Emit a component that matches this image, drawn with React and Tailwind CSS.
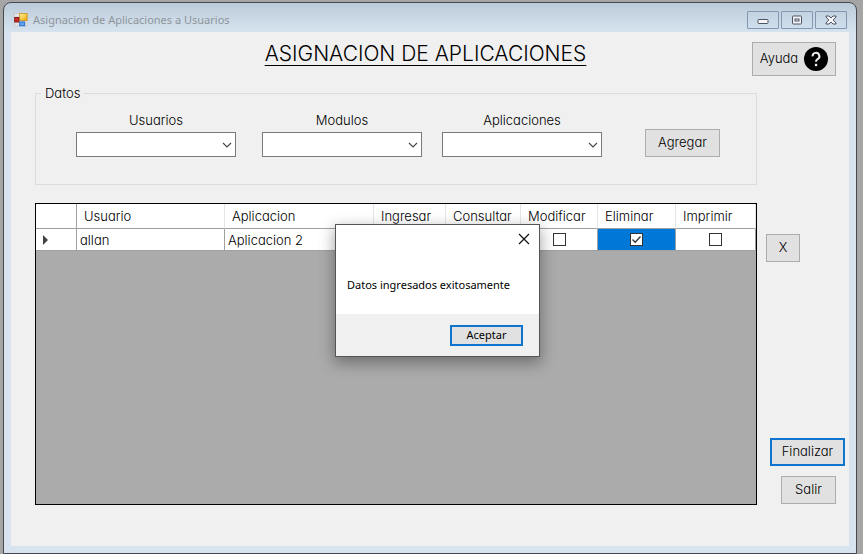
import React from "react";

const BUTTON = "flex items-center justify-center bg-[#e1e1e1] border border-[#adadad]";

const COLUMNS = ["Usuario", "Aplicacion", "Ingresar", "Consultar", "Modificar", "Eliminar", "Imprimir"];

const ROW = {
  usuario: "allan",
  aplicacion: "Aplicacion 2",
  permisos: [
    { name: "Ingresar", checked: false },
    { name: "Consultar", checked: false },
    { name: "Modificar", checked: false },
    { name: "Eliminar", checked: true, selected: true },
    { name: "Imprimir", checked: false },
  ],
};

function FormIcon() {
  return (
    <svg viewBox="0 0 14 14" className="h-3.5 w-3.5" aria-hidden="true">
      <defs>
        <linearGradient id="formYellow" x1="0" y1="0" x2="1" y2="1">
          <stop offset="0" stopColor="#fff3a0" />
          <stop offset="1" stopColor="#eda900" />
        </linearGradient>
      </defs>
      <rect x="0.5" y="0.5" width="12.5" height="12.5" fill="#e4e4e4" stroke="#c0c4c8" strokeWidth="0.6" />
      <rect x="5.7" y="0.5" width="7.4" height="7" fill="url(#formYellow)" stroke="#c98f1a" strokeWidth="0.8" />
      <rect x="0.7" y="4.4" width="4.2" height="4.6" fill="#c92a22" stroke="#7d1410" strokeWidth="0.9" />
      <rect x="5.7" y="8.9" width="5" height="3.9" fill="#5aa5f0" stroke="#2667c4" strokeWidth="0.9" />
    </svg>
  );
}

function WindowButton({ label, children }) {
  return (
    <button
      aria-label={label}
      className="flex h-[18px] w-8 items-center justify-center rounded-[1px] border border-[#8497b0] bg-linear-to-b from-[#c3d3e2] to-[#cfdeec]"
    >
      <svg viewBox="0 0 14 10" className="h-2.5 w-3.5" fill="#f5f5f5" stroke="#4b5262" strokeWidth="1">
        {children}
      </svg>
    </button>
  );
}

function Combo({ id, label }) {
  return (
    <div className="flex w-40 flex-col">
      <label htmlFor={id} className="mb-1 text-center leading-4">
        {label}
      </label>
      <div className="relative">
        <select id={id} className="block h-[25px] w-full appearance-none border border-[#7a7a7a] bg-white px-1" />
        <svg viewBox="0 0 10 6" className="pointer-events-none absolute top-2.5 right-1 h-1.5 w-2.5" fill="none" stroke="#444" strokeWidth="1.1">
          <path d="M1 1 L5 5 L9 1" />
        </svg>
      </div>
    </div>
  );
}

function Check({ name, checked }) {
  return (
    <span className="relative block h-[13px] w-[13px]">
      <input
        type="checkbox"
        aria-label={name}
        defaultChecked={checked}
        className="peer block h-[13px] w-[13px] appearance-none border border-[#333] bg-white"
      />
      <svg
        viewBox="0 0 13 13"
        className="pointer-events-none absolute inset-0 hidden h-[13px] w-[13px] peer-checked:block"
        fill="none"
        stroke="#333"
        strokeWidth="1.3"
      >
        <path d="M2.5 6.5 L5.2 9.2 L10.5 3.5" />
      </svg>
    </span>
  );
}

function Grid() {
  return (
    <div className="min-w-0 flex-1 border border-black bg-[#ababab]">
      <table className="w-full table-fixed border-separate border-spacing-0 bg-white text-left">
        <colgroup>
          <col className="w-[41px]" />
          <col className="w-[148px]" />
          <col className="w-[149px]" />
          <col className="w-[72px]" />
          <col className="w-[75px]" />
          <col className="w-[77px]" />
          <col className="w-[78px]" />
          <col className="w-20" />
        </colgroup>
        <thead>
          <tr className="h-[25px]">
            <th aria-label="Fila" className="border-r border-b border-[#a0a0a0] p-0" />
            {COLUMNS.map((name) => (
              <th key={name} className="border-r border-b border-r-[#e5e5e5] border-b-[#a0a0a0] p-0 pl-[7px] leading-5 font-light">
                {name}
              </th>
            ))}
          </tr>
        </thead>
        <tbody>
          <tr className="h-[22px]">
            <th scope="row" aria-label="Fila actual" className="border-r border-b border-[#a0a0a0] p-0 pl-[7px]">
              <svg viewBox="0 0 5 10" className="h-2.5 w-[5px]" fill="#444">
                <path d="M0 0 L5 5 L0 10 Z" />
              </svg>
            </th>
            <td className="border-r border-b border-[#a0a0a0] p-0 pl-[3px] leading-5">{ROW.usuario}</td>
            <td className="border-r border-b border-[#a0a0a0] p-0 pl-[3px] leading-5">{ROW.aplicacion}</td>
            {ROW.permisos.map((p) => (
              <td
                key={p.name}
                className={
                  p.selected
                    ? "border-r border-b border-[#a0a0a0] bg-[#0078d7] p-0"
                    : "border-r border-b border-[#a0a0a0] p-0"
                }
              >
                <div className="flex justify-center">
                  <Check name={p.name} checked={p.checked} />
                </div>
              </td>
            ))}
          </tr>
        </tbody>
      </table>
    </div>
  );
}

function MessageBox() {
  return (
    <div
      role="dialog"
      aria-label="Mensaje"
      className="absolute top-[224px] left-[335px] flex w-[205px] flex-col border border-[#555] bg-white font-['Noto_Sans','Open_Sans',sans-serif] text-[11px] font-normal text-black shadow-[0_5px_14px_1px_rgba(0,0,0,0.35)]"
    >
      <button aria-label="Cerrar" className="mt-[7px] mr-2 flex h-3.5 w-3.5 items-center justify-center self-end">
        <svg viewBox="0 0 12 12" className="h-3 w-3" stroke="#111" strokeWidth="1.2">
          <path d="M1 1 L11 11 M11 1 L1 11" />
        </svg>
      </button>
      <p className="mt-[31px] mb-[21px] pl-[11px] leading-4 whitespace-nowrap">Datos ingresados exitosamente</p>
      <div className="flex h-[42px] items-center justify-end bg-[#f0f0f0] pr-4">
        <button className="flex h-[21px] w-[73px] items-center justify-center border-2 border-[#0f74cb] bg-[#e1e1e1]">
          Aceptar
        </button>
      </div>
    </div>
  );
}

export default function App() {
  return (
    <div className="relative flex min-h-screen bg-[#a5a5a5] pt-0.5 pr-1.5 pl-[3px] font-['Century_Gothic','Inter',sans-serif] text-[13px] font-light text-black [font-feature-settings:'cv11']">
      <div className="flex min-w-0 flex-1 flex-col rounded-t-lg border border-[#454a50] bg-[#d7e4f0] bg-linear-to-b from-[#bccbd9] to-[#d7e4f0] to-[30px] px-[7px] pb-[7px]">
        <div className="flex h-[29px] items-center pt-1 pr-0.5 pl-[3px]">
          <FormIcon />
          <span className="ml-[5px] flex-1 font-['Noto_Sans','Open_Sans',sans-serif] text-[11px] leading-4 font-normal text-[#8f959b]">
            Asignacion de Aplicaciones a Usuarios
          </span>
          <div className="flex gap-0.5">
            <WindowButton label="Minimizar">
              <rect x="2" y="4.5" width="10" height="4" rx="0.8" />
            </WindowButton>
            <WindowButton label="Maximizar">
              <rect x="2.5" y="1" width="9" height="8" rx="0.8" />
              <rect x="5" y="4" width="4" height="2" />
            </WindowButton>
            <WindowButton label="Cerrar ventana">
              <path d="M2 1 H5 L7 3 L9 1 H12 V2 L9.2 5 L12 8 V9 H9 L7 7 L5 9 H2 V8 L4.8 5 L2 2 Z" />
            </WindowButton>
          </div>
        </div>

        <main className="flex flex-1 flex-col bg-[#f0f0f0] pt-2.5">
          <header className="flex items-start pr-[13px] pl-22">
            <h1 className="flex-1 text-center text-[21px] leading-6 font-light whitespace-nowrap underline decoration-1 underline-offset-4">
              ASIGNACION DE APLICACIONES
            </h1>
            <button className={`${BUTTON} h-[34px] w-21 gap-1.5`}>
              Ayuda
              <svg viewBox="0 0 24 24" className="h-6 w-6" aria-hidden="true">
                <circle cx="12" cy="12" r="12" fill="#000" />
                <path d="M8.6 9.4 A3.4 3.4 0 1 1 13.6 12.2 C12.3 13 12 13.4 12 14.8" fill="none" stroke="#f0f0f0" strokeWidth="2" />
                <rect x="10.9" y="16.8" width="2.3" height="2.3" fill="#f0f0f0" />
              </svg>
            </button>
          </header>

          <fieldset className="mt-2 mr-[92px] ml-6 border border-[#dcdcdc] pr-9 pb-[27px] pl-10">
            <legend className="-ml-[35px] px-1 leading-[18px]">Datos</legend>
            <div className="grid grid-cols-[186fr_180fr_203fr_75fr] items-end pt-2.5">
              <Combo id="usuarios" label="Usuarios" />
              <Combo id="modulos" label="Modulos" />
              <Combo id="aplicaciones" label="Aplicaciones" />
              <button className={`${BUTTON} h-7`}>Agregar</button>
            </div>
          </fieldset>

          <div className="mt-[18px] mb-[41px] flex flex-1 pl-6">
            <Grid />
            <div className="flex w-[92px] flex-col pt-[31px] pb-px">
              <button className={`${BUTTON} ml-[9px] h-7 w-[34px]`}>X</button>
              <button className="mt-auto ml-[13px] flex h-7 w-[75px] items-center justify-center border-2 border-[#0f74cb] bg-[#e1e1e1]">
                Finalizar
              </button>
              <button className={`${BUTTON} mt-2.5 ml-6 h-7 w-[55px]`}>Salir</button>
            </div>
          </div>
        </main>
      </div>
      <MessageBox />
    </div>
  );
}
